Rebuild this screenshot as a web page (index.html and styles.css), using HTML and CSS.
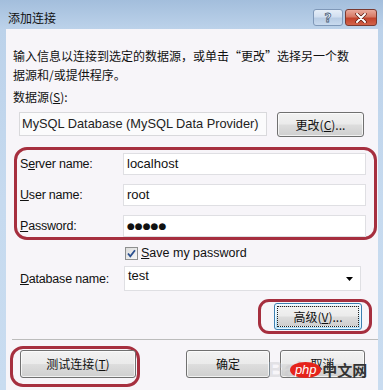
FILE: index.html
```html
<!DOCTYPE html>
<html lang="zh-CN">
<head>
<meta charset="utf-8">
<link rel="stylesheet" href="styles.css">
</head>
<body>
<div class="window">
  <div class="titlebar">
    <div class="title">添加连接</div>
    <div class="caption-btns">
      <div class="cap-btn help"><span>?</span></div>
      <div class="cap-btn close">
        <svg width="14" height="10" viewBox="0 0 14 10"><path d="M3 1 L11 9 M11 1 L3 9" stroke="#5a1a10" stroke-width="3.4" stroke-linecap="round"/><path d="M3 1 L11 9 M11 1 L3 9" stroke="#fff" stroke-width="2" stroke-linecap="round"/></svg>
      </div>
    </div>
  </div>
  <div class="client">
    <div class="intro">输入信息以连接到选定的数据源，或单击“更改”选择另一个数<br>据源和/或提供程序。</div>
    <div class="ds-label">数据源(<u>S</u>):</div>
    <div class="ds-row">
      <div class="ds-field">MySQL Database (MySQL Data Provider)</div>
      <div class="btn ds-btn">更改(<u>C</u>)...</div>
    </div>
    <div class="red-group">
      <div class="form-row"><div class="lbl">S<u>e</u>rver name:</div><div class="input">localhost</div></div>
      <div class="form-row"><div class="lbl"><u>U</u>ser name:</div><div class="input">root</div></div>
      <div class="form-row"><div class="lbl"><u>P</u>assword:</div><div class="input dots">●●●●●</div></div>
    </div>
    <div class="check-row">
      <div class="checkbox">
        <svg width="11" height="11" viewBox="0 0 11 11"><path d="M2 5.5 L4.3 8.3 L9 2.2" fill="none" stroke="#2a4f8f" stroke-width="1.8"/></svg>
      </div>
      <div class="check-text"><u>S</u>ave my password</div>
    </div>
    <div class="db-row">
      <div class="lbl db-lbl"><u>D</u>atabase name:</div>
      <div class="combo"><span>test</span><svg class="arrow" width="7" height="4" viewBox="0 0 7 4"><path d="M0 0 H7 L3.5 4 Z" fill="#000"/></svg></div>
    </div>
    <div class="adv-row">
      <div class="red-ring adv-ring">
        <div class="btn adv-btn"><div class="focus">高级(<u>V</u>)...</div></div>
      </div>
    </div>
    <div class="sep"></div>
    <div class="bottom-row">
      <div class="red-ring test-ring">
        <div class="btn test-btn">测试连接(<u>T</u>)</div>
      </div>
      <div class="btn ok-btn">确定</div>
      <div class="btn cancel-btn">取消</div>
    </div>
    <div class="watermark">
      <span class="bai">Bai</span>
      <span class="php">php</span><span class="cn">中文网</span>
    </div>
  </div>
</div>
</body>
</html>
```

FILE: styles.css
```css
* { box-sizing: border-box; }
html, body { margin: 0; padding: 0; }
body {
  width: 383px;
  height: 390px;
  overflow: hidden;
  font-family: "Liberation Sans", "Noto Sans CJK SC", sans-serif;
  color: #000;
}
u { text-decoration: underline; text-underline-offset: 1px; }

.window {
  width: 383px;
  height: 390px;
  display: flex;
  flex-direction: column;
  background: linear-gradient(to bottom, #a3bedc 0px, #bcd2ea 29px, #c6daef 200px, #c9dcf0 390px);
}

.titlebar {
  height: 29px;
  display: flex;
  align-items: flex-start;
  padding: 0 6px 0 8px;
  flex: none;
}
.title {
  margin-top: 11px;
  font-family: "Noto Sans CJK SC", sans-serif;
  font-size: 12px;
  line-height: 14px;
  color: #111;
}
.caption-btns {
  margin-left: auto;
  margin-top: 9px;
  display: flex;
  gap: 2px;
}
.cap-btn {
  height: 17px;
  border-radius: 3px;
  display: flex;
  align-items: center;
  justify-content: center;
}
.help {
  width: 30px;
  border: 1px solid #7f98b8;
  background: linear-gradient(to bottom, #e6eef8 0%, #d2dff0 45%, #b8cce4 55%, #c9daee 100%);
}
.help span {
  font-family: "DejaVu Sans", sans-serif;
  font-weight: bold;
  font-size: 12px;
  line-height: 12px;
  color: #f4f7fb;
  -webkit-text-stroke: 0.8px #4a5f7c;
}
.close {
  width: 32px;
  border: 1px solid #7a3a30;
  background: linear-gradient(to bottom, #e9a99b 0%, #d77a66 45%, #c2432c 55%, #d2634a 100%);
}

.client {
  flex: 1;
  margin: 0 5px 0 6px;
  background: #f7f5f9;
  position: relative;
  font-size: 12.5px;
}

.intro {
  margin-top: 17px;
  padding-left: 7px;
  font-family: "Noto Sans CJK SC", sans-serif;
  font-size: 12px;
  line-height: 19px;
  height: 38px;
  white-space: nowrap;
  color: #111;
}
.ds-label {
  margin-top: 6px;
  padding-left: 7px;
  font-family: "Noto Sans CJK SC", sans-serif;
  font-size: 12px;
  line-height: 14px;
  height: 14px;
  color: #111;
}
.ds-row {
  margin-top: 8px;
  margin-left: 13px;
  display: flex;
  align-items: flex-start;
  gap: 10px;
}
.ds-field {
  width: 248px;
  height: 24px;
  border: 1px solid #d9d9dc;
  background: #fbfbfc;
  padding-left: 2px;
  font-size: 12.8px;
  line-height: 22px;
  color: #222;
  white-space: nowrap;
  overflow: hidden;
}
.btn {
  display: flex;
  align-items: center;
  justify-content: center;
  border: 1px solid #707070;
  border-radius: 3px;
  background: linear-gradient(to bottom, #f2f2f2 0%, #ebebeb 48%, #dddddd 52%, #cfcfcf 100%);
  box-shadow: inset 0 0 0 1px rgba(255,255,255,0.7);
  font-family: "Noto Sans CJK SC", sans-serif;
  font-size: 12px;
  line-height: 14px;
  color: #111;
}
.ds-btn { width: 87px; height: 25px; }

.red-group {
  margin: 10px 1px 0 8px;
  border: 3px solid #a62f3f;
  border-radius: 13px;
  padding: 3px 0 0 3px;
  display: flex;
  flex-direction: column;
  gap: 9px;
}
.form-row {
  display: flex;
  align-items: center;
  height: 22px;
}
.lbl {
  width: 103px;
  flex: none;
  font-size: 12.5px;
  line-height: 14px;
  color: #111;
  letter-spacing: -0.2px;
}
.input {
  width: 243px;
  height: 22px;
  border: 1px solid #dfdfe3;
  background: #fff;
  padding-left: 3px;
  font-size: 13px;
  line-height: 20px;
  color: #111;
}
.input.dots {
  font-family: "DejaVu Sans", sans-serif;
  font-size: 9px;
  letter-spacing: 0px;
  line-height: 20px;
}

.check-row {
  margin-top: 7px;
  margin-left: 119px;
  display: flex;
  align-items: center;
  height: 13px;
}
.checkbox {
  width: 13px;
  height: 13px;
  border: 1px solid #8e8f8f;
  background: linear-gradient(135deg, #dcdcdc, #f7f7f7);
  display: flex;
  align-items: center;
  justify-content: center;
}
.check-text {
  margin-left: 3px;
  font-size: 12.5px;
  line-height: 13px;
  color: #111;
}

.db-row {
  margin-top: 6px;
  margin-left: 14px;
  display: flex;
  align-items: center;
  height: 25px;
}
.db-lbl { width: 104px; }
.combo {
  width: 237px;
  height: 25px;
  border: 1px solid #dfdfe3;
  background: #fff;
  padding-left: 3px;
  display: flex;
  align-items: flex-start;
  font-size: 13px;
  line-height: 18px;
  color: #111;
}
.combo .arrow { margin-left: auto; margin-right: 7px; margin-top: 10px; }

.adv-row {
  display: flex;
  justify-content: flex-end;
  margin-top: 8px;
  padding-right: 6px;
}
.red-ring {
  border: 3px solid #a62f3f;
  border-radius: 11px;
}
.adv-ring {
  padding: 1px 7px 1px 13px;
}
.adv-btn {
  width: 88px;
  height: 27px;
  border-color: #3c7fb1;
  background: linear-gradient(to bottom, #eaf6fd 0%, #d9f0fc 48%, #bee6fd 52%, #a7d9f5 100%);
  padding: 2px;
}
.adv-btn .focus {
  width: 100%;
  height: 100%;
  border: 1px dotted #222;
  display: flex;
  align-items: center;
  justify-content: center;
  background: linear-gradient(to bottom, #f2f2f2 0%, #ebebeb 48%, #dddddd 52%, #cfcfcf 100%);
}

.sep {
  margin: 5px 0 0 6px;
  height: 1px;
  background: #bcbcbc;
}

.bottom-row {
  display: flex;
  align-items: flex-start;
  margin-top: 6px;
  margin-left: 4px;
}
.test-ring {
  padding: 1px 1px 6px 7px;
  border-radius: 13px;
}
.test-btn { width: 116px; height: 28px; }
.ok-btn { width: 84px; height: 28px; margin-left: 46px; margin-top: 4px; }
.cancel-btn { width: 85px; height: 28px; margin-left: 10px; margin-top: 4px; }

.watermark {
  position: absolute;
  left: 262px;
  top: 328px;
  display: flex;
  align-items: center;
  pointer-events: none;
}
.bai {
  font-family: "Liberation Sans", sans-serif;
  font-size: 22px;
  font-weight: bold;
  color: rgba(200, 200, 205, 0.45);
  margin-right: -12px;
}
.php {
  width: 31px;
  height: 16px;
  border-radius: 50%;
  background: #e5231b;
  color: #fff;
  font-family: "Liberation Sans", sans-serif;
  font-size: 13px;
  font-style: italic;
  line-height: 15px;
  text-align: center;
}
.cn {
  margin-left: 1px;
  font-family: "Noto Sans CJK SC", sans-serif;
  font-size: 15px;
  font-weight: bold;
  line-height: 16px;
  color: #333;
}
```
